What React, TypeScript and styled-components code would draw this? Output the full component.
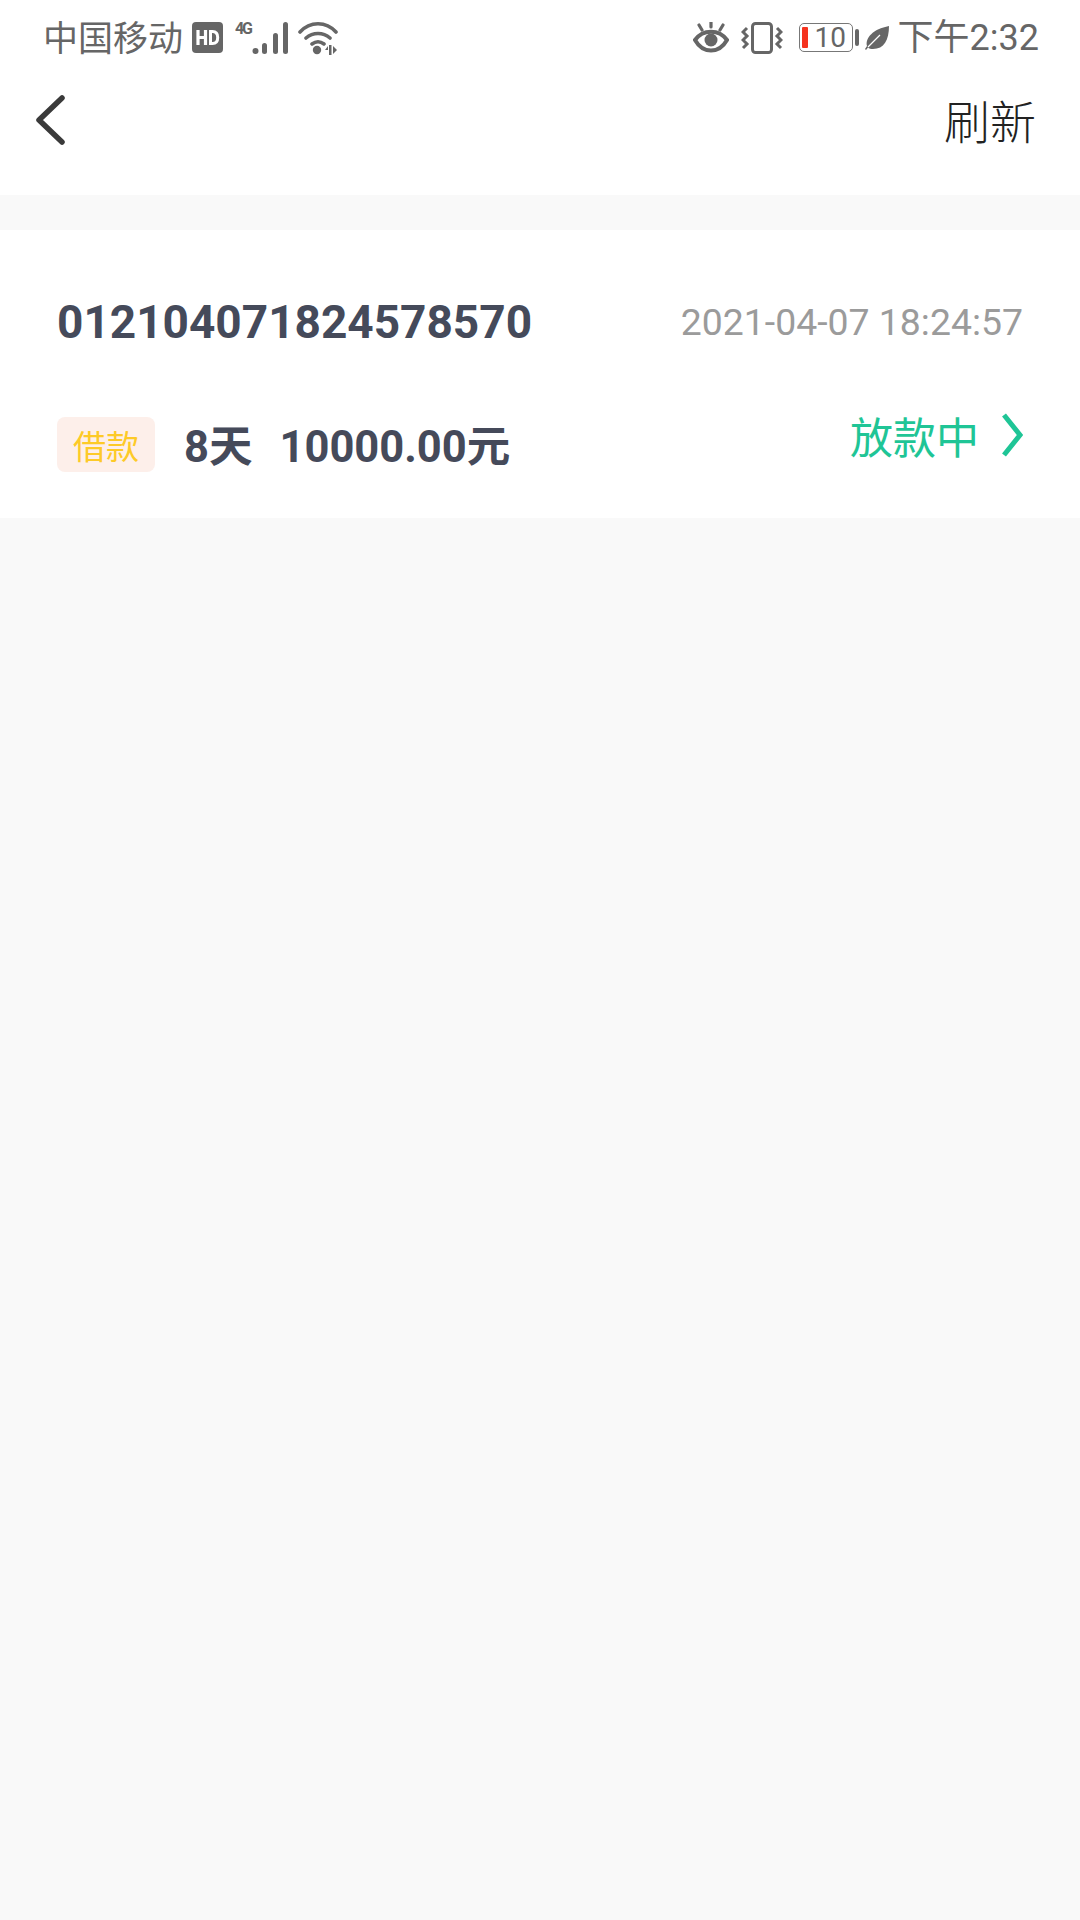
import styled, { createGlobalStyle } from 'styled-components';

const GlobalStyle = createGlobalStyle`
  html, body {
    margin: 0;
    padding: 0;
    background: #f9f9f9;
  }
  body {
    font-family: Roboto, "Noto Sans CJK SC", sans-serif;
  }
`;

const App = () => {
  return (
    <Page>
      <GlobalStyle />
      <Header>
        <StatusBar>
          <StatusGroup>
            <Carrier>中国移动</Carrier>
            <HdIcon width="31" height="31" viewBox="0 0 31 31">
              <rect width="31" height="31" rx="4" fill="#666" />
              <path d="M6 8v15M13.500 8v15M6 15.500h7.500" stroke="#fff" strokeWidth="3.200" fill="none" />
              <path d="M18.500 9.500v12h2c3.500 0 5.200-2 5.200-6s-1.700-6-5.200-6z" stroke="#fff" strokeWidth="3" fill="none" />
            </HdIcon>
            <NetworkIcon width="54" height="42" viewBox="0 -4 54 42">
              <text x="0" y="13" fontFamily="Roboto" fontSize="16" fontWeight="700" fill="#666" textLength="18">4G</text>
              <circle cx="20.500" cy="30" r="3" fill="#666" />
              <rect x="27" y="22" width="5" height="11" rx="2.500" fill="#666" />
              <rect x="38" y="12" width="5" height="21" rx="2.500" fill="#666" />
              <rect x="48" y="1" width="5" height="32" rx="2.500" fill="#666" />
            </NetworkIcon>
            <WifiIcon width="40" height="34" viewBox="0 0 40 34">
              <path d="M2 11C12 0 28 0 38 11M8 17c7-6 17-6 24 0M14 23c4-3 8-3 12 0" stroke="#666" strokeWidth="3.600" fill="none" strokeLinecap="round" />
              <circle cx="19" cy="29" r="4.200" fill="#666" />
              <path d="M30 29l-3 0 3-4zM31 24h2.500v10H31zM35 25l4 4-4 4z" fill="#666" />
            </WifiIcon>
          </StatusGroup>
          <StatusGroup>
            <svg width="36" height="31" viewBox="0 0 36 31">
              <path d="M18 0v5M6 3l3 5M30 3l-3 5" stroke="#666" strokeWidth="3.200" fill="none" strokeLinecap="round" />
              <path d="M2 18c8-11 24-11 32 0c-8 14-24 14-32 0z" stroke="#666" strokeWidth="4" fill="none" />
              <circle cx="18" cy="18" r="6.500" fill="#666" />
            </svg>
            <VibrateIcon width="42" height="32" viewBox="0 0 42 32">
              <rect x="11.500" y="1.500" width="19" height="29" rx="3" stroke="#666" strokeWidth="3" fill="none" />
              <path d="M6 6L2 10l4 4-4 4 4 4-4 4M36 6l4 4-4 4 4 4-4 4 4 4" stroke="#666" strokeWidth="3" fill="none" />
            </VibrateIcon>
            <Battery>
              <BatteryBody>
                <BatteryLevel />
                <BatteryText>10</BatteryText>
              </BatteryBody>
              <BatteryCap />
            </Battery>
            <LeafIcon width="24" height="24" viewBox="0 0 24 24">
              <path d="M24 0C24 14 19 23 8 23c-2 0-4-.6-5-1.600L1 24l-1-1 2-3C0 12 8 3 24 0z" fill="#666" />
              <path d="M3 21L15 9" stroke="#fff" strokeWidth="1.200" />
            </LeafIcon>
            <Clock>下午2:32</Clock>
          </StatusGroup>
        </StatusBar>
        <NavBar>
          <svg width="32" height="50" viewBox="0 0 32 50">
            <path d="M28 3L5 25l23 22" stroke="#3a3a3a" strokeWidth="5.500" fill="none" strokeLinecap="round" strokeLinejoin="round" />
          </svg>
          <Refresh>刷新</Refresh>
        </NavBar>
      </Header>
      <Card>
        <CardRow>
          <OrderNumber>012104071824578570</OrderNumber>
          <OrderTime>2021-04-07 18:24:57</OrderTime>
        </CardRow>
        <DetailRow>
          <Details>
            <Tag>借款</Tag>
            <Term>8天</Term>
            <Amount>10000.00元</Amount>
          </Details>
          <Status>
            <StatusText>放款中</StatusText>
            <svg width="22" height="44" viewBox="0 0 22 44">
              <path d="M3 2l16 20L3 42" stroke="#1fc596" strokeWidth="5" fill="none" />
            </svg>
          </Status>
        </DetailRow>
      </Card>
    </Page>
  );
};

export default App;

const Page = styled.div`
  width: 1080px;
  height: 1920px;
  background: #f9f9f9;
  overflow: hidden;
`;

const Header = styled.header`
  background: #fff;
  height: 195px;
  margin-bottom: 35px;
`;

const StatusBar = styled.div`
  height: 75px;
  padding: 0 41px 0 43px;
  display: flex;
  align-items: center;
  justify-content: space-between;
`;

const StatusGroup = styled.div`
  display: flex;
  align-items: center;
`;

const Carrier = styled.span`
  font-size: 35px;
  color: #666;
  font-family: "Noto Sans CJK SC", sans-serif;
  line-height: 40px;
  margin-bottom: 3px;
`;

const HdIcon = styled.svg`
  margin-left: 9px;
`;

const NetworkIcon = styled.svg`
  margin-left: 12px;
`;

const WifiIcon = styled.svg`
  margin-left: 9px;
`;

const VibrateIcon = styled.svg`
  margin-left: 12px;
`;

const Battery = styled.div`
  display: flex;
  align-items: center;
  gap: 2px;
  margin-left: 16px;
`;

const BatteryBody = styled.div`
  width: 54px;
  height: 29px;
  box-sizing: border-box;
  border: 1.500px solid #777;
  border-radius: 5px;
  display: flex;
  align-items: center;
  padding-left: 2px;
  gap: 7px;
`;

const BatteryLevel = styled.div`
  width: 6px;
  height: 21px;
  border-radius: 1px;
  background: #f5331f;
`;

const BatteryText = styled.span`
  font-size: 28px;
  color: #666;
  line-height: 26px;
`;

const BatteryCap = styled.div`
  width: 4px;
  height: 17px;
  border-radius: 2px;
  background: #666;
`;

const LeafIcon = styled.svg`
  margin-left: 6px;
  margin-right: 9px;
`;

const Clock = styled.span`
  font-size: 36px;
  color: #666;
  line-height: 40px;
`;

const NavBar = styled.div`
  height: 90px;
  padding: 0 44px 0 34px;
  display: flex;
  align-items: center;
  justify-content: space-between;
`;

const Refresh = styled.span`
  font-size: 46px;
  font-weight: 300;
  color: #222;
  font-family: "Noto Sans CJK SC", sans-serif;
  margin-bottom: 3px;
`;

const Card = styled.section`
  background: #fff;
  height: 288px;
  padding: 0 57px;
  box-sizing: border-box;
`;

const CardRow = styled.div`
  height: 132px;
  padding-top: 51px;
  box-sizing: border-box;
  display: flex;
  align-items: center;
  justify-content: space-between;
`;

const OrderNumber = styled.span`
  font-size: 46px;
  font-weight: 700;
  color: #454a5a;
`;

const OrderTime = styled.span`
  font-size: 37.400px;
  color: #9b9b9b;
`;

const DetailRow = styled.div`
  display: flex;
  align-items: center;
  justify-content: space-between;
  margin-top: 50px;
`;

const Details = styled.div`
  display: flex;
  align-items: center;
`;

const Tag = styled.span`
  width: 98px;
  height: 55px;
  border-radius: 8px;
  background: #fdefea;
  color: #fdca28;
  font-size: 33px;
  font-family: "Noto Sans CJK SC", sans-serif;
  display: flex;
  align-items: center;
  justify-content: center;
  margin-right: 29px;
`;

const Term = styled.span`
  font-size: 43.500px;
  font-weight: 700;
  color: #454a5a;
  margin-right: 27px;
  margin-bottom: 2px;
`;

const Amount = styled.span`
  font-size: 43.500px;
  font-weight: 700;
  color: #454a5a;
  margin-bottom: 2px;
`;

const Status = styled.div`
  display: flex;
  align-items: center;
  gap: 22px;
  margin-top: -19px;
`;

const StatusText = styled.span`
  font-size: 43px;
  color: #1fc596;
  font-family: "Noto Sans CJK SC", sans-serif;
`;
